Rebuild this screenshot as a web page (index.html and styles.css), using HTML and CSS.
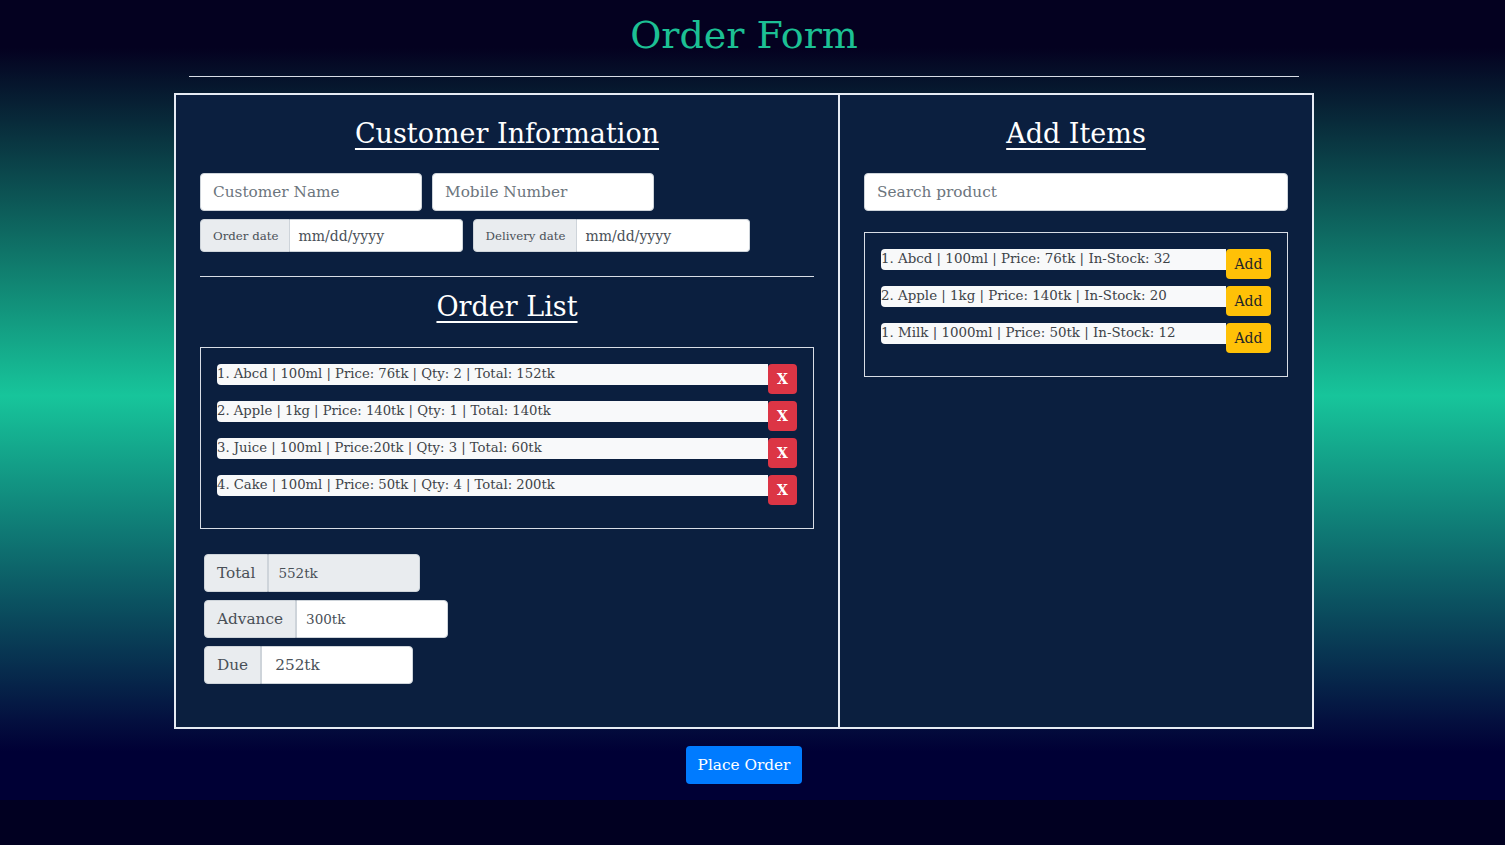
FILE: index.html
```html
<!DOCTYPE html>
<html lang="en">
<head>
<meta charset="utf-8">
<title>Order Form</title>
<link rel="stylesheet" href="styles.css">
</head>
<body>
<div class="page">
  <div class="container">
    <h1 class="title">Order Form</h1>
    <hr class="top-rule">
    <div class="frame">
      <section class="col col-left">
        <h2 class="heading">Customer Information</h2>
        <div class="field-row">
          <input class="field field-name" type="text" placeholder="Customer Name">
          <input class="field field-name" type="text" placeholder="Mobile Number">
        </div>
        <div class="date-row">
          <div class="igroup">
            <span class="addon addon-sm">Order date</span>
            <span class="date-input">mm/dd/yyyy</span>
          </div>
          <div class="igroup">
            <span class="addon addon-sm">Delivery date</span>
            <span class="date-input">mm/dd/yyyy</span>
          </div>
        </div>
        <hr class="rule">
        <h2 class="heading heading-list">Order List</h2>
        <div class="list-box">
          <div class="item"><span class="item-text">1. Abcd | 100ml | Price: 76tk | Qty: 2 | Total: 152tk</span><button class="btn-x">X</button></div>
          <div class="item"><span class="item-text">2. Apple | 1kg | Price: 140tk | Qty: 1 | Total: 140tk</span><button class="btn-x">X</button></div>
          <div class="item"><span class="item-text">3. Juice | 100ml | Price:20tk | Qty: 3 | Total: 60tk</span><button class="btn-x">X</button></div>
          <div class="item"><span class="item-text">4. Cake | 100ml | Price: 50tk | Qty: 4 | Total: 200tk</span><button class="btn-x">X</button></div>
        </div>
        <div class="totals">
          <div class="igroup tgroup">
            <span class="addon addon-lg">Total</span>
            <span class="amount amount-readonly amount-sm">552tk</span>
          </div>
          <div class="igroup tgroup">
            <span class="addon addon-lg">Advance</span>
            <span class="amount amount-sm">300tk</span>
          </div>
          <div class="igroup tgroup">
            <span class="addon addon-lg">Due</span>
            <span class="amount amount-md">252tk</span>
          </div>
        </div>
      </section>
      <section class="col col-right">
        <h2 class="heading">Add Items</h2>
        <input class="field field-search" type="text" placeholder="Search product">
        <div class="list-box product-box">
          <div class="item"><span class="item-text">1. Abcd | 100ml | Price: 76tk | In-Stock: 32</span><button class="btn-add">Add</button></div>
          <div class="item"><span class="item-text">2. Apple | 1kg | Price: 140tk | In-Stock: 20</span><button class="btn-add">Add</button></div>
          <div class="item"><span class="item-text">1. Milk | 1000ml | Price: 50tk | In-Stock: 12</span><button class="btn-add">Add</button></div>
        </div>
      </section>
    </div>
    <div class="actions">
      <button class="btn-place">Place Order</button>
    </div>
  </div>
</div>
</body>
</html>
```

FILE: styles.css
```css
html {
  background: #010021;
}

body {
  margin: 0;
  background: #010021;
  font-family: "DejaVu Serif", serif;
  color: #212529;
}

.page {
  min-height: 800px;
  box-sizing: border-box;
  padding-right: 17px;
  background: linear-gradient(to bottom,
    #040120 0%,
    #040120 6%,
    #17c59b 49.5%,
    #04103f 90%,
    #000035 94%,
    #000035 100%);
  overflow: hidden;
}

.container {
  width: 1140px;
  margin: 0 auto;
}

.title {
  margin: 11px 0 0;
  height: 48px;
  line-height: 48px;
  font-size: 38px;
  font-weight: normal;
  text-align: center;
  color: #1cc094;
}

.top-rule {
  margin: 17px 15px 0;
  border: 0;
  border-top: 1px solid #d8dde6;
  height: 0;
}

.frame {
  margin-top: 16px;
  box-sizing: border-box;
  width: 1140px;
  border: 2px solid #e6ebf3;
  background: #0b1f3f;
  display: grid;
  grid-template-columns: 664px 1fr;
}

.col {
  padding: 20px 24px 43px;
}

.col-left {
  border-right: 2px solid #e6ebf3;
}

.heading {
  margin: 0 0 20px;
  height: 38px;
  line-height: 38px;
  font-size: 27px;
  font-weight: normal;
  color: #ffffff;
  text-align: center;
  text-decoration: underline;
  text-decoration-thickness: 2px;
  text-underline-offset: 5px;
}

.field-row {
  display: flex;
  gap: 10px;
}

.field {
  box-sizing: border-box;
  height: 38px;
  border: 1px solid #ced4da;
  border-radius: 4px;
  background: #ffffff;
  padding: 0 12px;
  font-family: "DejaVu Serif", serif;
  font-size: 15.3px;
  color: #495057;
  outline: none;
}

.field::placeholder {
  color: #6c757d;
}

.field-name {
  width: 222px;
}

.field-search {
  display: block;
  width: 100%;
}

.date-row {
  display: flex;
  gap: 10px;
  margin-top: 8px;
}

.igroup {
  display: flex;
  align-items: stretch;
}

.addon {
  display: flex;
  align-items: center;
  box-sizing: border-box;
  background: #e9ecef;
  border: 1px solid #ced4da;
  border-radius: 4px 0 0 4px;
  color: #495057;
  white-space: nowrap;
}

.addon-sm {
  height: 33px;
  padding: 0 10px 0 12px;
  font-size: 11.8px;
}

.date-input {
  display: flex;
  align-items: center;
  box-sizing: border-box;
  width: 173px;
  height: 33px;
  padding: 0 9px;
  background: #ffffff;
  border: 1px solid #ced4da;
  border-left: 0;
  border-radius: 0 4px 4px 0;
  font-size: 14px;
  color: #495057;
}

.rule {
  margin: 24px 0 0;
  border: 0;
  border-top: 1px solid #d8dde6;
  height: 0;
}

.heading-list {
  margin-top: 11px;
  margin-bottom: 21px;
}

.list-box {
  border: 1px solid #d8dde6;
  padding: 16px;
}

.product-box {
  margin-top: 21px;
}

.item {
  display: flex;
  align-items: flex-start;
  margin-bottom: 7px;
}

.item-text {
  flex: 1;
  height: 21px;
  line-height: 19px;
  background: #f8f9fa;
  border-radius: 4px 0 0 4px;
  font-size: 13.2px;
  color: #3d4348;
  white-space: nowrap;
  overflow: hidden;
}

.product-box .item-text {
  font-size: 13.4px;
}

.btn-x {
  width: 29px;
  height: 30px;
  border: 0;
  border-radius: 4px;
  background: #dc3545;
  color: #ffffff;
  font-family: "DejaVu Serif", serif;
  font-size: 14px;
  font-weight: bold;
  padding: 0;
  cursor: pointer;
}

.btn-add {
  width: 45px;
  height: 30px;
  border: 0;
  border-radius: 4px;
  background: #ffc107;
  color: #212529;
  font-family: "DejaVu Serif", serif;
  font-size: 14px;
  padding: 0;
  cursor: pointer;
}

.totals {
  margin: 25px 0 0 4px;
  display: flex;
  flex-direction: column;
  gap: 8px;
}

.tgroup {
  height: 38px;
}

.addon-lg {
  height: 38px;
  padding: 0 12px;
  font-size: 15.3px;
}

.amount {
  display: flex;
  align-items: center;
  box-sizing: border-box;
  width: 152px;
  height: 38px;
  padding: 0 9px;
  background: #ffffff;
  border: 1px solid #ced4da;
  border-radius: 0 4px 4px 0;
  color: #495057;
}

.amount-readonly {
  background: #e9ecef;
}

.amount-sm {
  font-size: 13.5px;
}

.amount-md {
  font-size: 15.3px;
  padding-left: 13px;
}

.actions {
  display: flex;
  justify-content: center;
  padding: 17px 0 16px;
}

.btn-place {
  height: 38px;
  width: 116px;
  border: 0;
  border-radius: 4px;
  background: #007bff;
  color: #ffffff;
  font-family: "DejaVu Serif", serif;
  font-size: 15.3px;
  padding: 0;
  cursor: pointer;
}
```
